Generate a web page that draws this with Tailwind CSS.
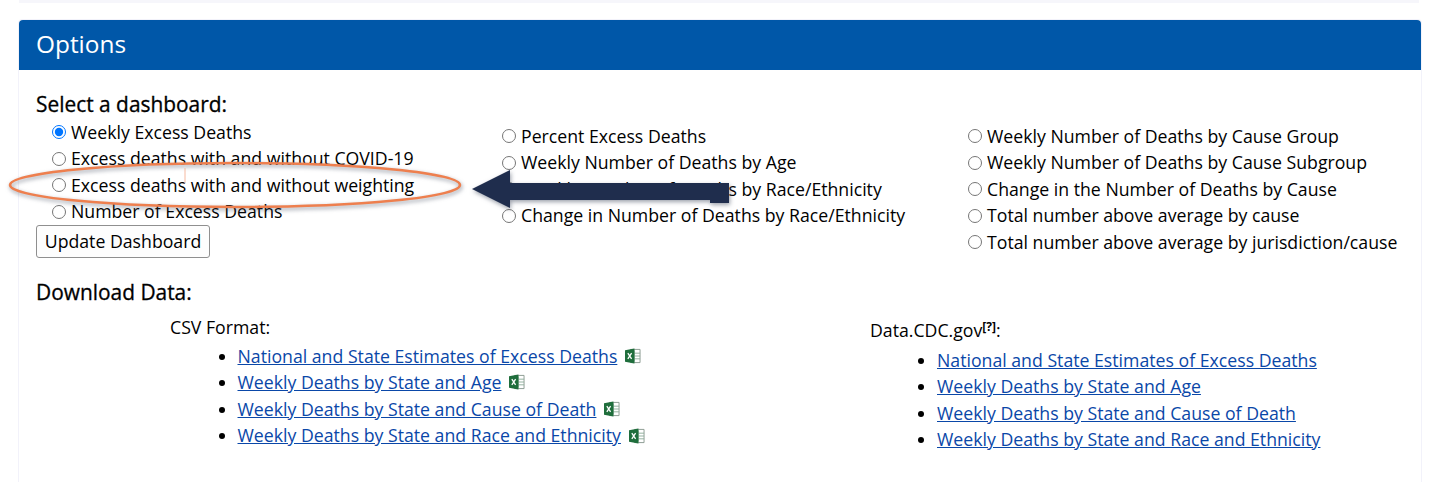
<!DOCTYPE html>
<html lang="en">
<head>
    <meta charset="UTF-8">
    <title>Options</title>
    <script src="https://cdn.jsdelivr.net/npm/@tailwindcss/browser@4"></script>
</head>
<body class="bg-white font-['Open_Sans',sans-serif] text-[17.7px] text-black overflow-hidden">
    <div class="relative w-[1456px] h-[482px] overflow-hidden">
        <div class="ml-[19px] w-[1400px] h-[3px] bg-[#f6f6fb]"></div>

        <div class="ml-[18px] mt-[16px] w-[1404px] h-[470px] border border-[#f2f2fa] rounded-t-[4px]">
            <div class="h-[50px] bg-[#0057a8] rounded-t-[4px] px-[17px] pb-[1px] flex items-center text-white text-[24.4px]">Options</div>

            <div class="pl-[17px] pt-[20px]">
                <div class="text-[20.9px] leading-[28px] [-webkit-text-stroke:0.3px_black] mb-[1px]">Select a dashboard:</div>

                <div class="flex">
                    <div class="w-[466px] pl-[16px]">
                        <label class="flex items-center gap-[5px] h-[26.5px]"><input type="radio" name="dash" checked class="w-[14px] h-[14px] accent-[#0075ff]">Weekly Excess Deaths</label>
                        <label class="flex items-center gap-[5px] h-[26.5px]"><input type="radio" name="dash" class="w-[14px] h-[14px]">Excess deaths with and without COVID-19</label>
                        <label class="flex items-center gap-[5px] h-[26.5px]"><input type="radio" name="dash" class="w-[14px] h-[14px]">Excess deaths with and without weighting</label>
                        <label class="flex items-center gap-[5px] h-[26.5px]"><input type="radio" name="dash" class="w-[14px] h-[14px]">Number of Excess Deaths</label>
                    </div>
                    <div class="w-[466px] pt-[4px]">
                        <label class="flex items-center gap-[5px] h-[26.5px]"><input type="radio" name="dash" class="w-[14px] h-[14px]">Percent Excess Deaths</label>
                        <label class="flex items-center gap-[5px] h-[26.5px]"><input type="radio" name="dash" class="w-[14px] h-[14px]">Weekly Number of Deaths by Age</label>
                        <label class="flex items-center gap-[5px] h-[26.5px]"><input type="radio" name="dash" class="w-[14px] h-[14px]">Weekly Number of Deaths by Race/Ethnicity</label>
                        <label class="flex items-center gap-[5px] h-[26.5px]"><input type="radio" name="dash" class="w-[14px] h-[14px]">Change in Number of Deaths by Race/Ethnicity</label>
                    </div>
                    <div class="pt-[4px]">
                        <label class="flex items-center gap-[5px] h-[26.5px]"><input type="radio" name="dash" class="w-[14px] h-[14px]">Weekly Number of Deaths by Cause Group</label>
                        <label class="flex items-center gap-[5px] h-[26.5px]"><input type="radio" name="dash" class="w-[14px] h-[14px]">Weekly Number of Deaths by Cause Subgroup</label>
                        <label class="flex items-center gap-[5px] h-[26.5px]"><input type="radio" name="dash" class="w-[14px] h-[14px]">Change in the Number of Deaths by Cause</label>
                        <label class="flex items-center gap-[5px] h-[26.5px]"><input type="radio" name="dash" class="w-[14px] h-[14px]">Total number above average by cause</label>
                        <label class="flex items-center gap-[5px] h-[26.5px]"><input type="radio" name="dash" class="w-[14px] h-[14px]">Total number above average by jurisdiction/cause</label>
                    </div>
                </div>

                <button class="block -mt-[31px] w-[174px] h-[33px] border border-[#8f8f8f] rounded-[3px] bg-[#fdfdfd]">Update Dashboard</button>

                <div class="mt-[20px] text-[20.9px] leading-[28px] [-webkit-text-stroke:0.3px_black]">Download Data:</div>

                <div class="flex mt-[9px]">
                    <div class="w-[834px] pl-[134px]">
                        <div class="h-[25px] leading-[25px]">CSV Format:</div>
                        <ul class="list-disc pl-[67.5px] text-[#0a47a8] marker:text-black mt-[3px]">
                            <li class="h-[26.6px] leading-[26.6px]"><span class="inline-flex items-center gap-[8px]"><a href="#" class="underline">National and State Estimates of Excess Deaths</a><svg width="16" height="16" viewBox="0 0 17 16"><path d="M6 1h10v14H6z" fill="#fff" stroke="#8a9a90"/><path d="M10 2v12M6 5h10M6 8h10M6 11h10" stroke="#8fae9c"/><path d="M0 2l10-2v16L0 14z" fill="#1f6e3c"/><path d="M3 5l4 6M7 5l-4 6" stroke="#fff" stroke-width="1.4"/></svg></span></li>
                            <li class="h-[26.6px] leading-[26.6px]"><span class="inline-flex items-center gap-[8px]"><a href="#" class="underline">Weekly Deaths by State and Age</a><svg width="16" height="16" viewBox="0 0 17 16"><path d="M6 1h10v14H6z" fill="#fff" stroke="#8a9a90"/><path d="M10 2v12M6 5h10M6 8h10M6 11h10" stroke="#8fae9c"/><path d="M0 2l10-2v16L0 14z" fill="#1f6e3c"/><path d="M3 5l4 6M7 5l-4 6" stroke="#fff" stroke-width="1.4"/></svg></span></li>
                            <li class="h-[26.6px] leading-[26.6px]"><span class="inline-flex items-center gap-[8px]"><a href="#" class="underline">Weekly Deaths by State and Cause of Death</a><svg width="16" height="16" viewBox="0 0 17 16"><path d="M6 1h10v14H6z" fill="#fff" stroke="#8a9a90"/><path d="M10 2v12M6 5h10M6 8h10M6 11h10" stroke="#8fae9c"/><path d="M0 2l10-2v16L0 14z" fill="#1f6e3c"/><path d="M3 5l4 6M7 5l-4 6" stroke="#fff" stroke-width="1.4"/></svg></span></li>
                            <li class="h-[26.6px] leading-[26.6px]"><span class="inline-flex items-center gap-[8px]"><a href="#" class="underline">Weekly Deaths by State and Race and Ethnicity</a><svg width="16" height="16" viewBox="0 0 17 16"><path d="M6 1h10v14H6z" fill="#fff" stroke="#8a9a90"/><path d="M10 2v12M6 5h10M6 8h10M6 11h10" stroke="#8fae9c"/><path d="M0 2l10-2v16L0 14z" fill="#1f6e3c"/><path d="M3 5l4 6M7 5l-4 6" stroke="#fff" stroke-width="1.4"/></svg></span></li>
                        </ul>
                    </div>
                    <div class="pt-[3px]">
                        <div class="h-[25px] leading-[25px]">Data.CDC.gov<sup class="text-[12px] font-bold">[?]</sup>:</div>
                        <ul class="list-disc pl-[67px] text-[#0a47a8] marker:text-black mt-[4px]">
                            <li class="h-[26.5px] leading-[26.5px]"><a href="#" class="underline">National and State Estimates of Excess Deaths</a></li>
                            <li class="h-[26.5px] leading-[26.5px]"><a href="#" class="underline">Weekly Deaths by State and Age</a></li>
                            <li class="h-[26.5px] leading-[26.5px]"><a href="#" class="underline">Weekly Deaths by State and Cause of Death</a></li>
                            <li class="h-[26.5px] leading-[26.5px]"><a href="#" class="underline">Weekly Deaths by State and Race and Ethnicity</a></li>
                        </ul>
                    </div>
                </div>
            </div>
        </div>

        <!-- annotation: ellipse and arrow drawn over the page -->
        <svg class="absolute left-0 top-0 pointer-events-none" width="1456" height="482" viewBox="0 0 1456 482">
            <ellipse cx="235" cy="185" rx="225" ry="22" fill="none" stroke="#ee7f4e" stroke-width="2.5" class="drop-shadow-[1px_2px_2px_rgba(60,70,90,0.55)]"/>
            <path d="M185 168v15" stroke="#f6b9a0" stroke-width="1"/>
            <path d="M472 189l38 -19v13h200h19v20h-19v-3h-200v8z" fill="#1f2d4d" class="drop-shadow-[1px_2px_2px_rgba(60,70,90,0.5)]"/>
        </svg>
    </div>
</body>
</html>
